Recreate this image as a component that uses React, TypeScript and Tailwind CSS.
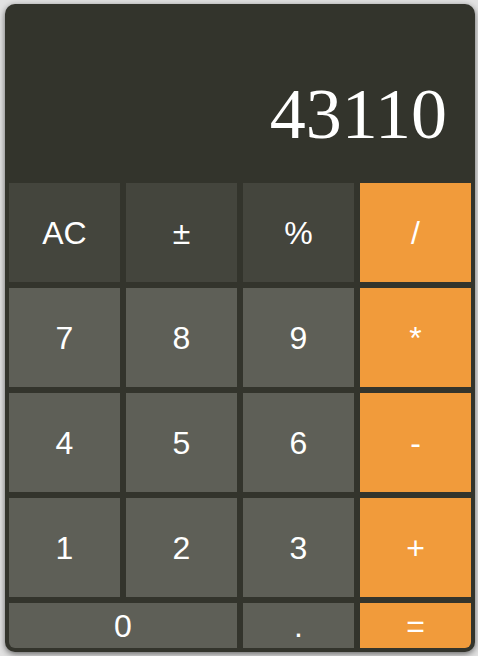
const rows: { label: string; kind: "fn" | "num" | "op"; wide?: boolean }[][] = [
  [
    { label: "AC", kind: "fn" },
    { label: "±", kind: "fn" },
    { label: "%", kind: "fn" },
    { label: "/", kind: "op" },
  ],
  [
    { label: "7", kind: "num" },
    { label: "8", kind: "num" },
    { label: "9", kind: "num" },
    { label: "*", kind: "op" },
  ],
  [
    { label: "4", kind: "num" },
    { label: "5", kind: "num" },
    { label: "6", kind: "num" },
    { label: "-", kind: "op" },
  ],
  [
    { label: "1", kind: "num" },
    { label: "2", kind: "num" },
    { label: "3", kind: "num" },
    { label: "+", kind: "op" },
  ],
];

const colors = {
  fn: "bg-[#44453d]",
  num: "bg-[#5e5f57]",
  op: "bg-[#f19b3b]",
};

const Key = ({ label, kind, className = "" }: { label: string; kind: "fn" | "num" | "op"; className?: string }) => (
  <button
    className={`${colors[kind]} ${className} flex items-center justify-center text-white text-[32px] font-['Liberation_Sans',Arial,sans-serif]`}
  >
    {label}
  </button>
);

export default function App() {
  return (
    <div className="w-[478px] h-[656px] bg-[#e2e2e2] pt-[4px] pl-[5px]">
      <div className="w-[470px] h-[648px] bg-[#33342c] rounded-[10px] px-[4px] pb-[4px] overflow-hidden shadow-[0_2px_6px_rgba(0,0,0,0.55)] flex flex-col">
        <div className="h-[179px] flex justify-end pt-[74px] pr-[24px] text-white text-[72px] leading-none font-['Liberation_Serif','Times_New_Roman',serif]">
          43110
        </div>
        <div className="grid grid-cols-4 gap-[6px] grid-rows-[99px_99px_99px_99px_45px]">
          {rows.flat().map((k) => (
            <Key key={k.label} label={k.label} kind={k.kind} />
          ))}
          <Key label="0" kind="num" className="col-span-2 rounded-bl-[6px]" />
          <Key label="." kind="num" />
          <Key label="=" kind="op" className="rounded-br-[6px]" />
        </div>
      </div>
    </div>
  );
}
